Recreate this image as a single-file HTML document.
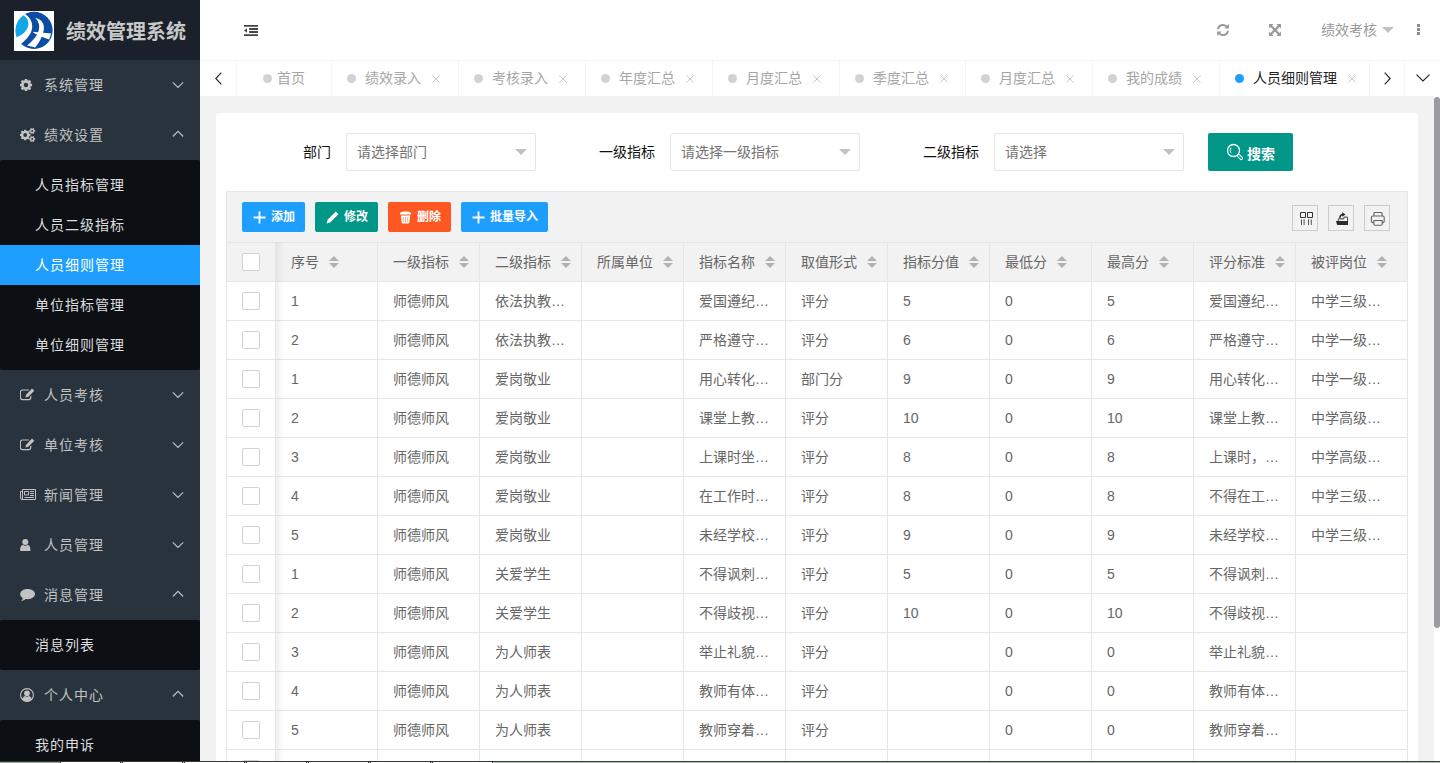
<!DOCTYPE html>
<html lang="zh-CN"><head><meta charset="utf-8"><title>绩效管理系统</title>
<style>
*{margin:0;padding:0;box-sizing:border-box}
html,body{width:1440px;height:763px;overflow:hidden;background:#f2f2f2}
body{font-family:"Liberation Sans","Noto Sans CJK SC",sans-serif;font-size:14px;color:#333;position:relative;line-height:1}
i{font-style:normal}
svg{display:block}
/* sidebar */
#side{position:absolute;left:0;top:0;width:200px;height:763px;background:#28333e;overflow:hidden}
#logo{position:absolute;left:0;top:0;width:200px;height:60px;background:#1b212b}
#logo .img{position:absolute;left:14px;top:11px;width:40px;height:40px;background:#fff}
#logo .t{position:absolute;left:66px;top:0;line-height:64px;font-size:20px;font-weight:bold;color:#c8c8c8;white-space:nowrap}
.ni{position:absolute;left:0;width:200px;height:50px;line-height:50px;color:#c2c2c2;letter-spacing:1px;white-space:nowrap}
.ni .ic{position:absolute;left:20px;top:17px;width:16px;height:16px}
.ni .tx{position:absolute;left:44px;top:0}
.ni .ar{position:absolute;left:172px;top:21px;width:12px;height:8px}
.sub{position:absolute;left:0;width:200px;background:#0c0f13;border-radius:2px}
.sub a{display:block;height:40px;line-height:40px;padding-left:35px;color:#dedede;letter-spacing:1px;white-space:nowrap}
.sub a.on{background:#1e9fff;color:#fff}
/* header */
#hd{position:absolute;left:200px;top:0;width:1240px;height:60px;background:#fff}
#hd .a{position:absolute}
#hd .user{position:absolute;left:1121px;top:0;line-height:60px;color:#999;white-space:nowrap}
/* tabs */
#tabs{position:absolute;left:200px;top:60px;width:1240px;height:36px;background:#fff;border-top:1px solid #f4f4f4}
.tab{position:absolute;top:0;height:35px;line-height:35px;border-right:1px solid #f4f4f4;color:#a6a6a6;white-space:nowrap}
.tab .dot{position:absolute;top:13px;width:9px;height:9px;border-radius:50%;background:#d2d2d2}
.tab .tt{position:absolute;top:0}
.tab .x{position:absolute;top:14px;width:8px;height:8px}
.tab.on{color:#222}
.tab.on .dot{background:#1e9fff}
.tbn{position:absolute;top:0;height:35px;border-right:1px solid #f4f4f4}
/* content */
#card{position:absolute;left:216px;top:113px;width:1202px;height:700px;background:#fff;border-radius:3px}
.lb{position:absolute;top:133px;height:38px;line-height:38px;color:#111;text-align:right;white-space:nowrap}
.sel{position:absolute;top:133px;width:190px;height:38px;border:1px solid #e6e6e6;border-radius:2px;background:#fff;line-height:36px;padding-left:10px;color:#757575;white-space:nowrap}
.sel:after{content:"";position:absolute;right:8px;top:15px;border:6px solid transparent;border-top-color:#c2c2c2;border-bottom-width:0}
#sbtn{position:absolute;left:1208px;top:133px;width:85px;height:38px;background:#009688;border-radius:2px;color:#fff;line-height:38px;white-space:nowrap}
#tool{position:absolute;left:226px;top:191px;width:1182px;height:52px;background:#f2f2f2;border:1px solid #e6e6e6}
.btn{position:absolute;top:202px;height:30px;line-height:30px;border-radius:2px;color:#fff;font-size:12px;font-weight:bold;white-space:nowrap}
.btn .bi{position:absolute;left:11px;top:9px;width:13px;height:13px}
.btn .bt{position:absolute;left:29px;top:0}
.tl{position:absolute;top:205px;width:26px;height:26px;border:1px solid #ccc}
/* table */
#tw{position:absolute;left:226px;top:242px;border-top:1px solid #e6e6e6;width:1182px;height:521px;overflow:hidden;border-left:1px solid #e6e6e6;border-right:1px solid #e6e6e6}
table.tb{border-collapse:separate;border-spacing:0;table-layout:fixed;width:1180px}
.tb th,.tb td{height:39px;border:1px solid #e6e6e6;border-left:0;border-top:0;text-align:left;padding:0 0 0 15px;font-weight:normal;color:#666;white-space:nowrap;overflow:hidden;font-size:14px}
.tb th{background:#f2f2f2}
.tb td{background:#fff}
.tb .ck{width:49px;padding:0 0 0 15px}
.tb th:not(.ck),.tb td:not(.ck){width:102px}
.tb th:last-child,.tb td:last-child{width:111px;border-right:0}
.cb{display:block;width:18px;height:18px;border:1px solid #d2d2d2;border-radius:2px;background:#fff}
.ht{display:inline-block;vertical-align:middle}
.sort{display:inline-block;vertical-align:middle;position:relative;width:10px;height:20px;margin-left:10px}
.sort i{position:absolute;left:0;border:5px solid transparent}
.sort .up{top:4px;border-bottom-color:#b2b2b2;border-top-width:0}
.sort .dn{top:11px;border-top-color:#b2b2b2;border-bottom-width:0}
#shadow{position:absolute;left:276px;top:242px;width:8px;height:521px;background:linear-gradient(to right,rgba(0,0,0,.06),rgba(0,0,0,0))}
/* scrollbar & bottom strip */
#sbar{position:absolute;left:1434px;top:96px;width:6px;height:667px;background:#fff}
#sbar i{position:absolute;left:0;top:1px;width:6px;height:531px;border-radius:3px;background:#9b9c9f}
#strip{position:absolute;left:0;top:761px;width:1440px;height:2px;background:#b9c4bc;border-top:1px solid #2f3d36}
#strip i{position:absolute;top:0;height:1px;background:#fff;border-left:1px solid #333;border-right:1px solid #333}
#strip b{position:absolute;left:0;top:0;width:60px;height:1px;background:#9aa39c}

</style></head>
<body>
<div id="side">
  <div id="logo"><div class="img"><svg width="40" height="40" viewBox="0 0 40 40" style=""><rect width="40" height="40" fill="#fff"/>
<circle cx="20" cy="19.400" r="18.600" fill="#0a4da2"/>
<path fill="#fff" d="M10.600 2.600C16 6.500 19.800 12 17.600 19.500 16 25 11 29.800 6.500 33.300L-2 34V0z"/>
<path fill="#12a5e8" d="M9.600 4.300C14 7.500 15.500 12 13.500 17 11.500 21.500 7 24.500 2.600 26.300A18.600 18.600 0 0 1 9.600 4.300z"/>
<path fill="#fff" d="M21.200 7C24.500 10 26 14.500 24.800 19 23.500 24 19 30 13 34.400L21.200 36.400C24 33 26.500 29 27.800 25.200 29.500 21 31.200 16 28.500 11.500 27 9 24.500 7.500 21.200 7z"/>
<path fill="#fff" d="M19 20.800L37.200 22.500 35 28.500 27 25.500 19.800 22z"/></svg></div><div class="t">绩效管理系统</div></div>
  <div class="ni" style="top:60px"><span class="ic"><svg width="16" height="16" viewBox="0 0 16 16" style=""><path fill="#c2c2c2" fill-rule="evenodd" d="M10.53 6.12 L10.71 6.65 L12.08 6.80 L12.08 9.20 L10.71 9.35 L10.53 9.88 L10.29 10.37 L11.15 11.45 L9.45 13.15 L8.37 12.29 L7.88 12.53 L7.35 12.71 L7.20 14.08 L4.80 14.08 L4.65 12.71 L4.12 12.53 L3.63 12.29 L2.55 13.15 L0.85 11.45 L1.71 10.37 L1.47 9.88 L1.29 9.35 L-0.08 9.20 L-0.08 6.80 L1.29 6.65 L1.47 6.12 L1.71 5.63 L0.85 4.55 L2.55 2.85 L3.63 3.71 L4.12 3.47 L4.65 3.29 L4.80 1.92 L7.20 1.92 L7.35 3.29 L7.88 3.47 L8.37 3.71 L9.45 2.85 L11.15 4.55 L10.29 5.63Z M3.80 8.00 a2.20 2.20 0 1 0 4.40 0 a2.20 2.20 0 1 0 -4.40 0Z"/></svg></span><span class="tx">系统管理</span><span class="ar"><svg width="12" height="8" viewBox="0 0 12 8" style=""><path fill="none" stroke="#c2c2c2" stroke-width="1.1" d="M0.8 1.300L6 6.500l5.200-5.200"/></svg></span></div>
  <div class="ni" style="top:110px"><span class="ic"><svg width="16" height="16" viewBox="0 0 16 16" style=""><path fill="#c2c2c2" fill-rule="evenodd" d="M9.08 6.39 L9.24 6.84 L10.50 6.95 L10.50 9.05 L9.24 9.16 L9.08 9.61 L8.87 10.03 L9.69 11.01 L8.21 12.49 L7.23 11.67 L6.81 11.88 L6.36 12.04 L6.25 13.30 L4.15 13.30 L4.04 12.04 L3.59 11.88 L3.17 11.67 L2.19 12.49 L0.71 11.01 L1.53 10.03 L1.32 9.61 L1.16 9.16 L-0.10 9.05 L-0.10 6.95 L1.16 6.84 L1.32 6.39 L1.53 5.97 L0.71 4.99 L2.19 3.51 L3.17 4.33 L3.59 4.12 L4.04 3.96 L4.15 2.70 L6.25 2.70 L6.36 3.96 L6.81 4.12 L7.23 4.33 L8.21 3.51 L9.69 4.99 L8.87 5.97Z M3.30 8.00 a1.90 1.90 0 1 0 3.80 0 a1.90 1.90 0 1 0 -3.80 0Z"/><path fill="#c2c2c2" fill-rule="evenodd" d="M14.19 2.75 L14.35 3.09 L15.20 3.13 L15.20 4.67 L14.35 4.71 L14.19 5.05 L13.98 5.36 L14.37 6.11 L13.03 6.89 L12.57 6.17 L12.20 6.20 L11.83 6.17 L11.37 6.89 L10.03 6.11 L10.42 5.36 L10.21 5.05 L10.05 4.71 L9.20 4.67 L9.20 3.13 L10.05 3.09 L10.21 2.75 L10.42 2.44 L10.03 1.69 L11.37 0.91 L11.83 1.63 L12.20 1.60 L12.57 1.63 L13.03 0.91 L14.37 1.69 L13.98 2.44Z M11.20 3.90 a1.00 1.00 0 1 0 2.00 0 a1.00 1.00 0 1 0 -2.00 0Z"/><path fill="#c2c2c2" fill-rule="evenodd" d="M14.19 10.95 L14.35 11.29 L15.20 11.33 L15.20 12.87 L14.35 12.91 L14.19 13.25 L13.98 13.56 L14.37 14.31 L13.03 15.09 L12.57 14.37 L12.20 14.40 L11.83 14.37 L11.37 15.09 L10.03 14.31 L10.42 13.56 L10.21 13.25 L10.05 12.91 L9.20 12.87 L9.20 11.33 L10.05 11.29 L10.21 10.95 L10.42 10.64 L10.03 9.89 L11.37 9.11 L11.83 9.83 L12.20 9.80 L12.57 9.83 L13.03 9.11 L14.37 9.89 L13.98 10.64Z M11.20 12.10 a1.00 1.00 0 1 0 2.00 0 a1.00 1.00 0 1 0 -2.00 0Z"/></svg></span><span class="tx">绩效设置</span><span class="ar" style="top:19.500px"><svg width="12" height="8" viewBox="0 0 12 8" style=""><path fill="none" stroke="#c2c2c2" stroke-width="1.1" d="M0.8 6.500L6 1.300l5.200 5.200"/></svg></span></div>
  <div class="sub" style="top:160px;height:210px;padding:5px 0"><a>人员指标管理</a><a>人员二级指标</a><a class="on">人员细则管理</a><a>单位指标管理</a><a>单位细则管理</a></div>
  <div class="ni" style="top:370px"><span class="ic"><svg width="16" height="16" viewBox="0 0 16 16" style=""><path fill="none" stroke="#c2c2c2" stroke-width="1.100" stroke-linejoin="round" d="M8.800 3H2.400a2 2 0 0 0-2 2v5.600a2 2 0 0 0 2 2h6.400a2 2 0 0 0 2-2V8.800"/><path fill="#c2c2c2" d="M12 1.500l2.300 2.300-6 6-2.900.8.700-2.900z"/></svg></span><span class="tx">人员考核</span><span class="ar"><svg width="12" height="8" viewBox="0 0 12 8" style=""><path fill="none" stroke="#c2c2c2" stroke-width="1.1" d="M0.8 1.300L6 6.500l5.200-5.200"/></svg></span></div>
  <div class="ni" style="top:420px"><span class="ic"><svg width="16" height="16" viewBox="0 0 16 16" style=""><path fill="none" stroke="#c2c2c2" stroke-width="1.100" stroke-linejoin="round" d="M8.800 3H2.400a2 2 0 0 0-2 2v5.600a2 2 0 0 0 2 2h6.400a2 2 0 0 0 2-2V8.800"/><path fill="#c2c2c2" d="M12 1.500l2.300 2.300-6 6-2.900.8.700-2.900z"/></svg></span><span class="tx">单位考核</span><span class="ar"><svg width="12" height="8" viewBox="0 0 12 8" style=""><path fill="none" stroke="#c2c2c2" stroke-width="1.1" d="M0.8 1.300L6 6.500l5.200-5.200"/></svg></span></div>
  <div class="ni" style="top:470px"><span class="ic"><svg width="17" height="16" viewBox="0 0 17 16" style=""><path fill="none" stroke="#c2c2c2" stroke-width="1" d="M2.500 2.500h13v10h-13zM2.500 4.500h-2v6.500a1.500 1.500 0 0 0 1.500 1.500h1"/><path fill="none" stroke="#c2c2c2" stroke-width="1" d="M4.500 4.500h4v3.500h-4zM10 4.500h4M10 6.500h4M10 8.500h4M4.500 10.500h9.500"/></svg></span><span class="tx">新闻管理</span><span class="ar"><svg width="12" height="8" viewBox="0 0 12 8" style=""><path fill="none" stroke="#c2c2c2" stroke-width="1.1" d="M0.8 1.300L6 6.500l5.200-5.200"/></svg></span></div>
  <div class="ni" style="top:520px"><span class="ic"><svg width="16" height="16" viewBox="0 0 16 16" style=""><circle cx="5.3" cy="5" r="3" fill="#c2c2c2"/><path fill="#c2c2c2" d="M0.3 14c-.6-4 1.2-6 2.6-6.2 .8.7 1.500 1 2.400 1s1.600-.3 2.400-1c1.400.2 3.200 2.200 2.600 6.200z"/></svg></span><span class="tx">人员管理</span><span class="ar"><svg width="12" height="8" viewBox="0 0 12 8" style=""><path fill="none" stroke="#c2c2c2" stroke-width="1.1" d="M0.8 1.300L6 6.500l5.200-5.200"/></svg></span></div>
  <div class="ni" style="top:570px"><span class="ic"><svg width="16" height="16" viewBox="0 0 16 16" style=""><path fill="#c2c2c2" d="M7.600 2c4.100 0 7.400 2.300 7.400 5.100s-3.300 5.100-7.400 5.100c-.6 0-1.200-.05-1.800-.15C4.600 13.200 3 13.900 1.200 14c.9-.8 1.500-1.700 1.600-2.700C1.300 10.300.2 8.800.2 7.100.2 4.300 3.500 2 7.600 2z"/></svg></span><span class="tx">消息管理</span><span class="ar" style="top:19.500px"><svg width="12" height="8" viewBox="0 0 12 8" style=""><path fill="none" stroke="#c2c2c2" stroke-width="1.1" d="M0.8 6.500L6 1.300l5.200 5.200"/></svg></span></div>
  <div class="sub" style="top:620px;height:50px;padding:5px 0"><a>消息列表</a></div>
  <div class="ni" style="top:670px"><span class="ic"><svg width="16" height="16" viewBox="0 0 16 16" style=""><circle cx="7" cy="8" r="6.400" fill="none" stroke="#c2c2c2" stroke-width="1.100"/><circle cx="7" cy="6.300" r="2.900" fill="#c2c2c2"/><path fill="#c2c2c2" d="M2.300 12.300c.5-2.200 2.100-3.100 2.900-3.200.5.400 1.100.7 1.800.7s1.300-.3 1.800-.7c.8.100 2.400 1 2.900 3.200A6.300 6.300 0 0 1 7 14.500a6.300 6.300 0 0 1-4.700-2.200z"/></svg></span><span class="tx">个人中心</span><span class="ar" style="top:19.500px"><svg width="12" height="8" viewBox="0 0 12 8" style=""><path fill="none" stroke="#c2c2c2" stroke-width="1.1" d="M0.8 6.500L6 1.300l5.200 5.200"/></svg></span></div>
  <div class="sub" style="top:720px;height:90px;padding:5px 0"><a>我的申诉</a><a>我的成绩</a></div>
</div>
<div id="hd">
  <div class="a" style="left:44px;top:25px"><svg width="14" height="11" viewBox="0 0 14 11" style=""><path fill="#444" d="M0 0h14v1.800H0zM5.200 3.100H14v1.800H5.200zM5.200 6.100H14v1.800H5.200zM0 9.200h14V11H0zM0 5.500L3 3.200v4.600z"/></svg></div>
  <div class="a" style="left:1016px;top:23px"><svg width="14" height="14" viewBox="0 0 14 14" style=""><path fill="none" stroke="#999" stroke-width="2" d="M2 6.200A5 5 0 0 1 11 4M12 7.800A5 5 0 0 1 3 10"/><path fill="#999" d="M12.900 1v4.600H8.300zM1.100 13V8.400h4.600z"/></svg></div>
  <div class="a" style="left:1069px;top:24px"><svg width="12" height="12" viewBox="0 0 12 12" style=""><path fill="#999" d="M0 0h4.600L3.100 1.500 6 4.400 8.900 1.500 7.400 0H12v4.600L10.500 3.100 7.600 6l2.900 2.900L12 7.400V12H7.400l1.500-1.500L6 7.600 3.100 10.500 4.600 12H0V7.400l1.500 1.500L4.400 6 1.500 3.100 0 4.600z"/></svg></div>
  <div class="a" style="left:1182px;top:27px;border:6px solid transparent;border-top-color:#c2c2c2;border-bottom-width:0"></div>
  <div class="a" style="left:1217px;top:24px"><svg width="3" height="11" viewBox="0 0 3 11" style=""><path fill="#8c8c99" d="M0 0h3v3H0zM0 4h3v3H0zM0 8h3v3H0z"/></svg></div>
  <div class="user">绩效考核</div>
</div>
<div id="tabs">
  <div class="tbn" style="left:0;width:37px"><div style="position:absolute;left:15px;top:11px"><svg width="7" height="13" viewBox="0 0 7 13" style=""><path fill="none" stroke="#222" stroke-width="1.100" d="M6.300 0.600L0.800 6.500l5.500 5.900"/></svg></div></div>
  <div class="tab" style="left:37px;width:95px"><i class="dot" style="left:26px"></i><span class="tt" style="left:40px">首页</span></div>
  <div class="tab" style="left:132px;width:127px"><i class="dot" style="left:15px"></i><span class="tt" style="left:33px">绩效录入</span><span class="x" style="left:100px"><svg width="8" height="8" viewBox="0 0 8 8" style=""><path stroke="#c2c2c2" stroke-width=".9" fill="none" d="M0.400 0.400l7.200 7.200M7.600 0.400l-7.200 7.200"/></svg></span></div>
  <div class="tab" style="left:259px;width:127px"><i class="dot" style="left:15px"></i><span class="tt" style="left:33px">考核录入</span><span class="x" style="left:100px"><svg width="8" height="8" viewBox="0 0 8 8" style=""><path stroke="#c2c2c2" stroke-width=".9" fill="none" d="M0.400 0.400l7.200 7.200M7.600 0.400l-7.200 7.200"/></svg></span></div>
  <div class="tab" style="left:386px;width:127px"><i class="dot" style="left:15px"></i><span class="tt" style="left:33px">年度汇总</span><span class="x" style="left:100px"><svg width="8" height="8" viewBox="0 0 8 8" style=""><path stroke="#c2c2c2" stroke-width=".9" fill="none" d="M0.400 0.400l7.200 7.200M7.600 0.400l-7.200 7.200"/></svg></span></div>
  <div class="tab" style="left:513px;width:127px"><i class="dot" style="left:15px"></i><span class="tt" style="left:33px">月度汇总</span><span class="x" style="left:100px"><svg width="8" height="8" viewBox="0 0 8 8" style=""><path stroke="#c2c2c2" stroke-width=".9" fill="none" d="M0.400 0.400l7.200 7.200M7.600 0.400l-7.200 7.200"/></svg></span></div>
  <div class="tab" style="left:640px;width:126px"><i class="dot" style="left:15px"></i><span class="tt" style="left:33px">季度汇总</span><span class="x" style="left:100px"><svg width="8" height="8" viewBox="0 0 8 8" style=""><path stroke="#c2c2c2" stroke-width=".9" fill="none" d="M0.400 0.400l7.200 7.200M7.600 0.400l-7.200 7.200"/></svg></span></div>
  <div class="tab" style="left:766px;width:127px"><i class="dot" style="left:15px"></i><span class="tt" style="left:33px">月度汇总</span><span class="x" style="left:100px"><svg width="8" height="8" viewBox="0 0 8 8" style=""><path stroke="#c2c2c2" stroke-width=".9" fill="none" d="M0.400 0.400l7.200 7.200M7.600 0.400l-7.200 7.200"/></svg></span></div>
  <div class="tab" style="left:893px;width:127px"><i class="dot" style="left:15px"></i><span class="tt" style="left:33px">我的成绩</span><span class="x" style="left:100px"><svg width="8" height="8" viewBox="0 0 8 8" style=""><path stroke="#c2c2c2" stroke-width=".9" fill="none" d="M0.400 0.400l7.200 7.200M7.600 0.400l-7.200 7.200"/></svg></span></div>
  <div class="tab on" style="left:1020px;width:150px"><i class="dot" style="left:15px"></i><span class="tt" style="left:33px">人员细则管理</span><span class="x" style="left:128px"><svg width="8" height="8" viewBox="0 0 8 8" style=""><path stroke="#c2c2c2" stroke-width=".9" fill="none" d="M0.400 0.400l7.200 7.200M7.600 0.400l-7.200 7.200"/></svg></span></div>
  <div class="tbn" style="left:1170px;width:35px"><div style="position:absolute;left:13.500px;top:10.500px"><svg width="7" height="13" viewBox="0 0 7 13" style=""><path fill="none" stroke="#222" stroke-width="1.100" d="M0.700 0.600l5.500 5.900-5.500 5.900"/></svg></div></div>
  <div class="tbn" style="left:1205px;width:35px;border-right:0"><div style="position:absolute;left:10.500px;top:13px"><svg width="14" height="8" viewBox="0 0 14 8" style=""><path fill="none" stroke="#222" stroke-width="1.100" d="M0.500 0.600L7 7l6.500-6.400"/></svg></div></div>
</div>
<div id="card"></div>
<div class="lb" style="left:236px;width:95px">部门</div><div class="sel" style="left:346px">请选择部门</div>
<div class="lb" style="left:560px;width:95px">一级指标</div><div class="sel" style="left:670px">请选择一级指标</div>
<div class="lb" style="left:884px;width:95px">二级指标</div><div class="sel" style="left:994px">请选择</div>
<div id="sbtn"><span style="position:absolute;left:18px;top:10px"><svg width="18" height="18" viewBox="0 0 18 18" style=""><circle cx="7.500" cy="7.500" r="6" fill="none" stroke="#fff" stroke-width="1.300"/><path d="M5.200 4.800a3.600 3.600 0 0 0 0 5" fill="none" stroke="#fff" stroke-width="1"/><rect x="-1.300" y="0" width="2.600" height="6" rx="1.300" transform="translate(11.900,11.900) rotate(-45)" fill="none" stroke="#fff" stroke-width="1"/></svg></span><span style="position:absolute;left:39px;top:2px;font-weight:bold">搜索</span></div>
<div id="tool"></div>
<div class="btn" style="left:242px;width:63px;background:#1e9fff"><span class="bi"><svg width="13" height="13" viewBox="0 0 13 13" style=""><path fill="#fff" d="M5.600 0.500h1.800v5.100h5.100v1.800H7.400v5.100H5.600V7.400H0.500V5.600h5.100z"/></svg></span><span class="bt">添加</span></div>
<div class="btn" style="left:315px;width:63px;background:#009688"><span class="bi"><svg width="13" height="13" viewBox="0 0 13 13" style=""><path fill="#fff" d="M9.800 0.600l2.600 2.600-8.200 8.200-3.600 1 1-3.600z"/></svg></span><span class="bt">修改</span></div>
<div class="btn" style="left:388px;width:63px;background:#ff5722"><span class="bi"><svg width="13" height="13" viewBox="0 0 13 13" style=""><path fill="#fff" d="M1 2.200c0-1 2.500-1.600 5.500-1.600s5.500.6 5.500 1.600v1.300H1zM1.800 4.600h9.400l-.9 7.200c-.1.500-.6.800-1.200.8H3.900c-.6 0-1.100-.3-1.200-.8z"/><path stroke="#ff5722" stroke-width=".9" d="M4.300 6v5M6.500 6v5M8.700 6v5" opacity=".55"/></svg></span><span class="bt">删除</span></div>
<div class="btn" style="left:461px;width:87px;background:#1e9fff"><span class="bi"><svg width="13" height="13" viewBox="0 0 13 13" style=""><path fill="#fff" d="M5.600 0.500h1.800v5.100h5.100v1.800H7.400v5.100H5.600V7.400H0.500V5.600h5.100z"/></svg></span><span class="bt">批量导入</span></div>
<div class="tl" style="left:1292px"><span style="position:absolute;left:0;top:0"><svg width="24" height="24" viewBox="0 0 24 24" style=""><path fill="none" stroke="#333" stroke-width="1" d="M7.500 6.500h5v5h-5zM14.500 6.500h5v5h-5z"/><path fill="none" stroke="#444" stroke-width=".9" d="M8.500 13.400V19M11.100 13.400V19M15.500 13.400V19M18.300 13.400V19"/></svg></span></div>
<div class="tl" style="left:1328px"><span style="position:absolute;left:0;top:0"><svg width="24" height="24" viewBox="0 0 24 24" style=""><path fill="#2b2b2b" d="M6.900 14.900H19V19H8.200z"/><path fill="none" stroke="#333" stroke-width=".9" d="M9.300 14.900v-2h5.600v-1.800h3.700v4"/><path fill="none" stroke="#2b2b2b" stroke-width="1.500" d="M10.900 12.400C10.700 10 12 8.600 14 8.600"/><path fill="#2b2b2b" d="M13.200 6.300L16.500 8.600 13.200 10.800z"/></svg></span></div>
<div class="tl" style="left:1364px"><span style="position:absolute;left:0;top:0"><svg width="24" height="24" viewBox="0 0 24 24" style=""><path fill="none" stroke="#666" stroke-width="1.100" d="M8.900 10V7.400C8.900 6.800 9.400 6.500 10 6.500h6c.6 0 1.100.3 1.100.9V10M8.600 16.600H7.800c-.8 0-1.400-.6-1.400-1.400v-3.800C6.400 10.600 7 10 7.800 10h10c.8 0 1.400.6 1.400 1.400v3.800c0 .8-.6 1.400-1.400 1.400h-.5M8.900 14.500h8.300v3.600c0 .6-.5 1.100-1.100 1.100H10c-.6 0-1.100-.5-1.100-1.100z"/></svg></span></div>
<div id="tw"><table class="tb"><thead><tr><th class="ck"><i class="cb"></i></th><th><span class="ht">序号</span><span class="sort"><i class="up"></i><i class="dn"></i></span></th><th><span class="ht">一级指标</span><span class="sort"><i class="up"></i><i class="dn"></i></span></th><th><span class="ht">二级指标</span><span class="sort"><i class="up"></i><i class="dn"></i></span></th><th><span class="ht">所属单位</span><span class="sort"><i class="up"></i><i class="dn"></i></span></th><th><span class="ht">指标名称</span><span class="sort"><i class="up"></i><i class="dn"></i></span></th><th><span class="ht">取值形式</span><span class="sort"><i class="up"></i><i class="dn"></i></span></th><th><span class="ht">指标分值</span><span class="sort"><i class="up"></i><i class="dn"></i></span></th><th><span class="ht">最低分</span><span class="sort"><i class="up"></i><i class="dn"></i></span></th><th><span class="ht">最高分</span><span class="sort"><i class="up"></i><i class="dn"></i></span></th><th><span class="ht">评分标准</span><span class="sort"><i class="up"></i><i class="dn"></i></span></th><th><span class="ht">被评岗位</span><span class="sort"><i class="up"></i><i class="dn"></i></span></th></tr></thead><tbody><tr><td class="ck"><i class="cb"></i></td><td>1</td><td>师德师风</td><td>依法执教…</td><td></td><td>爱国遵纪…</td><td>评分</td><td>5</td><td>0</td><td>5</td><td>爱国遵纪…</td><td>中学三级…</td></tr>
<tr><td class="ck"><i class="cb"></i></td><td>2</td><td>师德师风</td><td>依法执教…</td><td></td><td>严格遵守…</td><td>评分</td><td>6</td><td>0</td><td>6</td><td>严格遵守…</td><td>中学一级…</td></tr>
<tr><td class="ck"><i class="cb"></i></td><td>1</td><td>师德师风</td><td>爱岗敬业</td><td></td><td>用心转化…</td><td>部门分</td><td>9</td><td>0</td><td>9</td><td>用心转化…</td><td>中学一级…</td></tr>
<tr><td class="ck"><i class="cb"></i></td><td>2</td><td>师德师风</td><td>爱岗敬业</td><td></td><td>课堂上教…</td><td>评分</td><td>10</td><td>0</td><td>10</td><td>课堂上教…</td><td>中学高级…</td></tr>
<tr><td class="ck"><i class="cb"></i></td><td>3</td><td>师德师风</td><td>爱岗敬业</td><td></td><td>上课时坐…</td><td>评分</td><td>8</td><td>0</td><td>8</td><td>上课时，…</td><td>中学高级…</td></tr>
<tr><td class="ck"><i class="cb"></i></td><td>4</td><td>师德师风</td><td>爱岗敬业</td><td></td><td>在工作时…</td><td>评分</td><td>8</td><td>0</td><td>8</td><td>不得在工…</td><td>中学三级…</td></tr>
<tr><td class="ck"><i class="cb"></i></td><td>5</td><td>师德师风</td><td>爱岗敬业</td><td></td><td>未经学校…</td><td>评分</td><td>9</td><td>0</td><td>9</td><td>未经学校…</td><td>中学三级…</td></tr>
<tr><td class="ck"><i class="cb"></i></td><td>1</td><td>师德师风</td><td>关爱学生</td><td></td><td>不得讽刺…</td><td>评分</td><td>5</td><td>0</td><td>5</td><td>不得讽刺…</td><td></td></tr>
<tr><td class="ck"><i class="cb"></i></td><td>2</td><td>师德师风</td><td>关爱学生</td><td></td><td>不得歧视…</td><td>评分</td><td>10</td><td>0</td><td>10</td><td>不得歧视…</td><td></td></tr>
<tr><td class="ck"><i class="cb"></i></td><td>3</td><td>师德师风</td><td>为人师表</td><td></td><td>举止礼貌…</td><td>评分</td><td></td><td>0</td><td>0</td><td>举止礼貌…</td><td></td></tr>
<tr><td class="ck"><i class="cb"></i></td><td>4</td><td>师德师风</td><td>为人师表</td><td></td><td>教师有体…</td><td>评分</td><td></td><td>0</td><td>0</td><td>教师有体…</td><td></td></tr>
<tr><td class="ck"><i class="cb"></i></td><td>5</td><td>师德师风</td><td>为人师表</td><td></td><td>教师穿着…</td><td>评分</td><td></td><td>0</td><td>0</td><td>教师穿着…</td><td></td></tr>
<tr><td class="ck"><i class="cb"></i></td><td>1</td><td>师德师风</td><td>为人师表</td><td></td><td></td><td>评分</td><td></td><td>0</td><td>0</td><td></td><td></td></tr></tbody></table></div>
<div id="shadow"></div>
<div id="sbar"><i></i></div>
<div id="strip"><b></b><i style="left:60px;width:61px"></i><i style="left:122px;width:61px"></i><i style="left:184px;width:61px"></i><i style="left:246px;width:61px"></i><i style="left:308px;width:61px"></i><i style="left:370px;width:61px"></i><i style="left:432px;width:61px"></i></div>

</body></html>
